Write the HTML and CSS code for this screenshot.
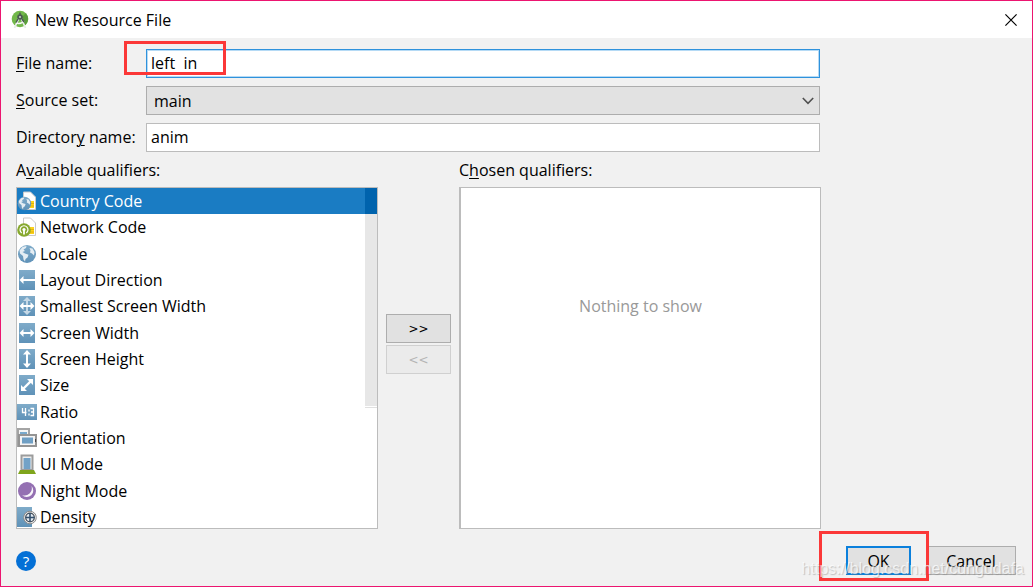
FILE: index.html
```html
<!DOCTYPE html>
<html lang="en">
<head>
<meta charset="utf-8">
<title>New Resource File</title>
<link rel="stylesheet" href="styles.css">
</head>
<body>
<svg class="defs" aria-hidden="true">
  <defs>
    <linearGradient id="steel" x1="0" y1="0" x2="0" y2="1"><stop offset="0" stop-color="#7fabc9"/><stop offset="1" stop-color="#5f92b8"/></linearGradient>
    <symbol id="sheet" viewBox="0 0 20 20">
      <path d="M6.5 1h7l5 5v12.5h-12z" fill="#fff" stroke="#c9c9c9"/>
      <path d="M12 10h5v7h-5z" fill="#fcd21c"/><path d="M12 12.5h5M12 15h5" stroke="#d7a500" stroke-width=".7"/>
    </symbol>
    <symbol id="globe" viewBox="0 0 20 20">
      <circle cx="10" cy="10" r="9" fill="url(#steel)"/>
      <path d="M2.500 6.500l3-3.500 4-1-.5 2-2.500 1.500 1.500 1.500-2.500 1 2.500 1.500 3.500 1.200-1 2.800-2 1.500-.5 2.500-1.500-2-.5-3.500L3 9.500zM12.500 4l3 .5 2 3.500-.5 3.500-2-2-2-1 .5-2z" fill="#e4edf3"/>
    </symbol>
  </defs>
</svg>
<main class="dialog">
  <header class="titlebar">
    <svg class="logo" viewBox="0 0 18 20" aria-hidden="true">
      <circle cx="9" cy="9" r="8.300" fill="#72b84a"/>
      <path d="M9 9L14.800 3.200a8.300 8.300 0 0 1-1.500 12.600z" fill="#5a9c3b"/>
      <path d="M8 8L3.500 18M10 8L14.500 18" stroke="#e8ece8" stroke-width="1.800" fill="none"/>
      <path d="M5 13q4.500 1.500 8-2" stroke="#f7f7f7" stroke-width="1.500" fill="none"/>
      <path d="M9 2.500v4M7 9l-2 3.500M11 9l2 3" stroke="#4b5a52" stroke-width="1.500"/><circle cx="9" cy="7" r="2.800" fill="#4b5a52"/><circle cx="9" cy="7" r="1" fill="#cfd8cf"/>
    </svg>
    <h1 class="title">New Resource File</h1>
    <button class="close" type="button" aria-label="Close"><svg viewBox="0 0 12 12"><path d="M.4.4l11.200 11.200M11.600.4L.4 11.600" stroke="#000" stroke-width="1.200"/></svg></button>
  </header>

  <form class="content">
    <div class="fields">
      <label for="file"><u>F</u>ile name:</label>
      <div class="control">
        <input class="field focused" id="file" type="text" value="left  in">
        <span class="marker marker-file"></span>
      </div>
      <label for="source"><u>S</u>ource set:</label>
      <div class="control">
        <select class="field dropdown" id="source"><option>main</option></select>
        <svg class="chevron" viewBox="0 0 12 8" aria-hidden="true"><path d="M.8 1L6 6.300 11.200 1" fill="none" stroke="#505050" stroke-width="1.600"/></svg>
      </div>
      <label for="dir">Director<u>y</u> name:</label>
      <input class="field" id="dir" type="text" value="anim">
    </div>

    <div class="qualifiers">
      <h2 class="caption">A<u>v</u>ailable qualifiers:</h2>
      <h2 class="caption caption-chosen">C<u>h</u>osen qualifiers:</h2>
      <div class="panel panel-available">
        <ul class="list">
          <li class="item selected"><svg class="icon" viewBox="0 0 20 20"><use href="#sheet"/><use href="#globe" x="0" y="5" width="15" height="15"/></svg>Country Code</li>
          <li class="item"><svg class="icon" viewBox="0 0 20 20"><use href="#sheet"/><circle cx="7" cy="13" r="6.800" fill="#87a92f"/><g fill="none" stroke="#fff" stroke-width="1.200"><path d="M4.700 16a4 4 0 1 1 4.600 0"/><path d="M7 12.500v5" stroke-width="1.800"/></g><circle cx="7" cy="12.500" r="1.600" fill="#fff"/></svg>Network Code</li>
          <li class="item"><svg class="icon" viewBox="0 0 20 20"><use href="#globe" width="20" height="20"/></svg>Locale</li>
          <li class="item"><svg class="icon" viewBox="0 0 20 20"><path d="M2 0h16v20H2z" fill="url(#steel)"/><path d="M5 10h13" stroke="#fff" stroke-width="2"/><path d="M2.500 10l4-4v8z" fill="#fff"/></svg>Layout Direction</li>
          <li class="item"><svg class="icon" viewBox="0 0 20 20"><path d="M2 0h16v20H2z" fill="url(#steel)"/><path d="M10 4v12" stroke="#c5d8e6" stroke-width="2"/><path d="M10 1l4 4H6zM10 19l4-4H6z" fill="#c5d8e6"/><path d="M5 10h10" stroke="#fff" stroke-width="2"/><path d="M2.500 10l4-4v8zM17.500 10l-4-4v8z" fill="#fff"/></svg>Smallest Screen Width</li>
          <li class="item"><svg class="icon" viewBox="0 0 20 20"><path d="M2 0h16v20H2z" fill="url(#steel)"/><path d="M5 10h10" stroke="#fff" stroke-width="2"/><path d="M2.500 10l4-4v8zM17.500 10l-4-4v8z" fill="#fff"/></svg>Screen Width</li>
          <li class="item"><svg class="icon" viewBox="0 0 20 20"><path d="M2 0h16v20H2z" fill="url(#steel)"/><path d="M10 4v12" stroke="#fff" stroke-width="2"/><path d="M10 1l4 4.500H6zM10 19l4-4.500H6z" fill="#fff"/></svg>Screen Height</li>
          <li class="item"><svg class="icon" viewBox="0 0 20 20"><path d="M2 0h16v20H2z" fill="url(#steel)"/><path d="M6 14l8-8" stroke="#fff" stroke-width="2.400"/><path d="M16 4v6l-6-6zM4 16v-6l6 6z" fill="#fff"/></svg>Size</li>
          <li class="item"><svg class="icon" viewBox="0 0 20 20"><path d="M0 2h20v16H0z" fill="url(#steel)"/><path d="M5.500 6v4.500h4M8.500 6v8M12 7.500v2M12 11.500v2M13.500 6.500h3v7h-3M14 10h2.500" fill="none" stroke="#fff" stroke-width="1.300"/></svg>Ratio</li>
          <li class="item"><svg class="icon" viewBox="0 0 20 20"><path d="M1 1h11v17H1z" fill="#f4f4f4" stroke="#a4a4a4" stroke-width="2"/><path d="M3 4h7v6H3z" fill="#79a9cc"/><path d="M2 7h17v11H2z" fill="#f4f4f4" stroke="#949494" stroke-width="2"/><path d="M5 9.500h11v6H5z" fill="#6f9fc4"/><path d="M18.500 11v3" stroke="#444"/></svg>Orientation</li>
          <li class="item"><svg class="icon" viewBox="0 0 20 20"><path d="M4.500 1.500h11V16h-11z" fill="#eee" stroke="#9c9c9c" stroke-width="2"/><path d="M6.500 4h7v11h-7z" fill="#72a2c7"/><path d="M3 16h14l2 4H1z" fill="#7fa51c"/></svg>UI Mode</li>
          <li class="item"><svg class="icon" viewBox="0 0 20 20"><circle cx="10" cy="10" r="9" fill="#9470b2"/><path d="M14.500 5a6.300 6.300 0 1 1-9.500 9 7.300 7.300 0 0 0 9.500-9z" fill="#fff" opacity=".92"/></svg>Night Mode</li>
          <li class="item"><svg class="icon" viewBox="0 0 20 20"><path d="M0 0h15v20H0z" fill="url(#steel)"/><circle cx="13" cy="10.500" r="6.300" fill="#eee" stroke="#8b8b8b"/><circle cx="13" cy="10.500" r="4.300" fill="#dfe9f2" stroke="#424b54" stroke-width="1.200"/><path d="M13 6v9M8.500 10.500h9" stroke="#34506d" stroke-width="1.600"/></svg>Density</li>
        </ul>
        <span class="scroll"></span>
      </div>
      <div class="movers">
        <button class="btn mover" type="button">&gt;&gt;</button>
        <button class="btn mover" type="button" disabled>&lt;&lt;</button>
      </div>
      <div class="panel panel-chosen">Nothing to show</div>
    </div>
  </form>

  <footer class="footer">
    <button class="help" type="button" aria-label="Help">?</button>
    <div class="control">
      <button class="btn primary" type="button">OK</button>
      <span class="marker marker-ok"></span>
    </div>
    <button class="btn cancel" type="button">Cancel</button>
  </footer>
  <span class="watermark">https://blog.csdn.net/cungudafa</span>
</main>
</body>
</html>
```
FILE: styles.css
```css
* { box-sizing: border-box; }
body {
  margin: 0;
  font: 16px/20px "Open Sans", "Noto Sans", sans-serif;
  color: #000;
}
button, input, select { font: inherit; color: inherit; }
.defs { position: absolute; width: 0; height: 0; }
.dialog {
  position: relative;
  display: flex;
  flex-direction: column;
  min-height: 100vh;
  border: 1px solid #ec1570;
  background: #f1f1f1;
}
.titlebar {
  display: flex;
  align-items: center;
  height: 37px;
  padding: 0 15px 0 10px;
  background: #fff;
}
.logo { width: 18px; height: 20px; }
.title { flex: 1; margin: 0 0 0 6px; font-size: 16px; font-weight: 400; }
.close { display: flex; padding: 0; border: 0; background: none; }
.close svg { width: 12px; height: 12px; }
.content {
  flex: 1;
  display: flex;
  flex-direction: column;
  padding: 11px 212px 0 15px;
}
.fields {
  display: grid;
  grid-template-columns: 130px 1fr;
  row-gap: 8px;
  align-items: center;
}
.fields label { padding-bottom: 1px; }
u { text-decoration-thickness: 1px; text-underline-offset: 2px; }
.control { position: relative; display: flex; }
.field {
  width: 100%;
  height: 29px;
  padding: 0 4px 2px;
  border: 1px solid #bcbcbc;
  border-radius: 0;
  outline: 0;
  background: #fff;
}
.focused { border-color: #2f92dc; box-shadow: inset 0 0 0 1px #b5daf5; }
.dropdown { appearance: none; padding: 0 7px; border-color: #adadad; background: #e2e2e2; }
.chevron { position: absolute; right: 6px; top: 11px; width: 12px; height: 8px; pointer-events: none; }
.marker { position: absolute; border: 3px solid #fb3838; pointer-events: none; }
.marker-file { left: -22px; top: -8px; width: 102px; height: 34px; }
.marker-ok { inset: -15px -18px -6px -27px; }
.qualifiers {
  flex: 1;
  display: grid;
  grid-template-columns: 1fr 65px 1fr;
  grid-template-rows: 20px 1fr;
  gap: 7px 8px;
  margin: 8px -1px 0 0;
}
.caption { margin: 0; font-size: 16px; font-weight: 400; }
.caption-chosen { grid-column: 3; }
.panel { display: flex; border: 1px solid #bcbcbc; background: #fff; }
.list {
  flex: 1;
  display: grid;
  grid-auto-rows: 1fr;
  margin: 0 0 -2px;
  padding: 0;
  list-style: none;
}
.item { display: flex; align-items: center; gap: 3px; }
.selected { background: #1a7cc3; color: #fff; }
.icon { width: 20px; height: 20px; }
.scroll {
  width: 12px;
  height: 220px;
  background: linear-gradient(#0063ad 26px, #e7e7e7 26px 218px, #fff 218px 219px, #e0e0e0 219px);
}
.movers { display: flex; flex-direction: column; justify-content: center; gap: 2px; padding-bottom: 28px; }
.btn {
  width: 65px;
  height: 29px;
  padding: 0;
  border: 1px solid #adadad;
  background: #e1e1e1;
}
.mover { font: 12px/20px "DejaVu Sans", sans-serif; }
.btn:disabled { border-color: #d0d0d0; background: #ebebeb; color: #b5b5b5; }
.primary { border: 2px solid #0b80dc; }
.cancel { width: 90px; }
.panel-chosen { justify-content: center; padding-top: 108px; border-left-width: 2px; color: #999; }
.footer {
  display: flex;
  align-items: center;
  gap: 15px;
  padding: 17px 16px 11px 15px;
}
.help {
  width: 20px;
  height: 20px;
  margin-right: auto;
  padding: 0;
  border: 0;
  border-radius: 50%;
  background: #0470d6;
  color: #fff;
  font-size: 15px;
  line-height: 20px;
}
.watermark {
  position: absolute;
  right: 8px;
  bottom: 7px;
  font: 16px/20px "Liberation Sans", Arial, sans-serif;
  color: rgba(255, 255, 255, 0.7);
  text-shadow: 1px 1px 1px rgba(120, 120, 120, 0.4);
  pointer-events: none;
}
```
